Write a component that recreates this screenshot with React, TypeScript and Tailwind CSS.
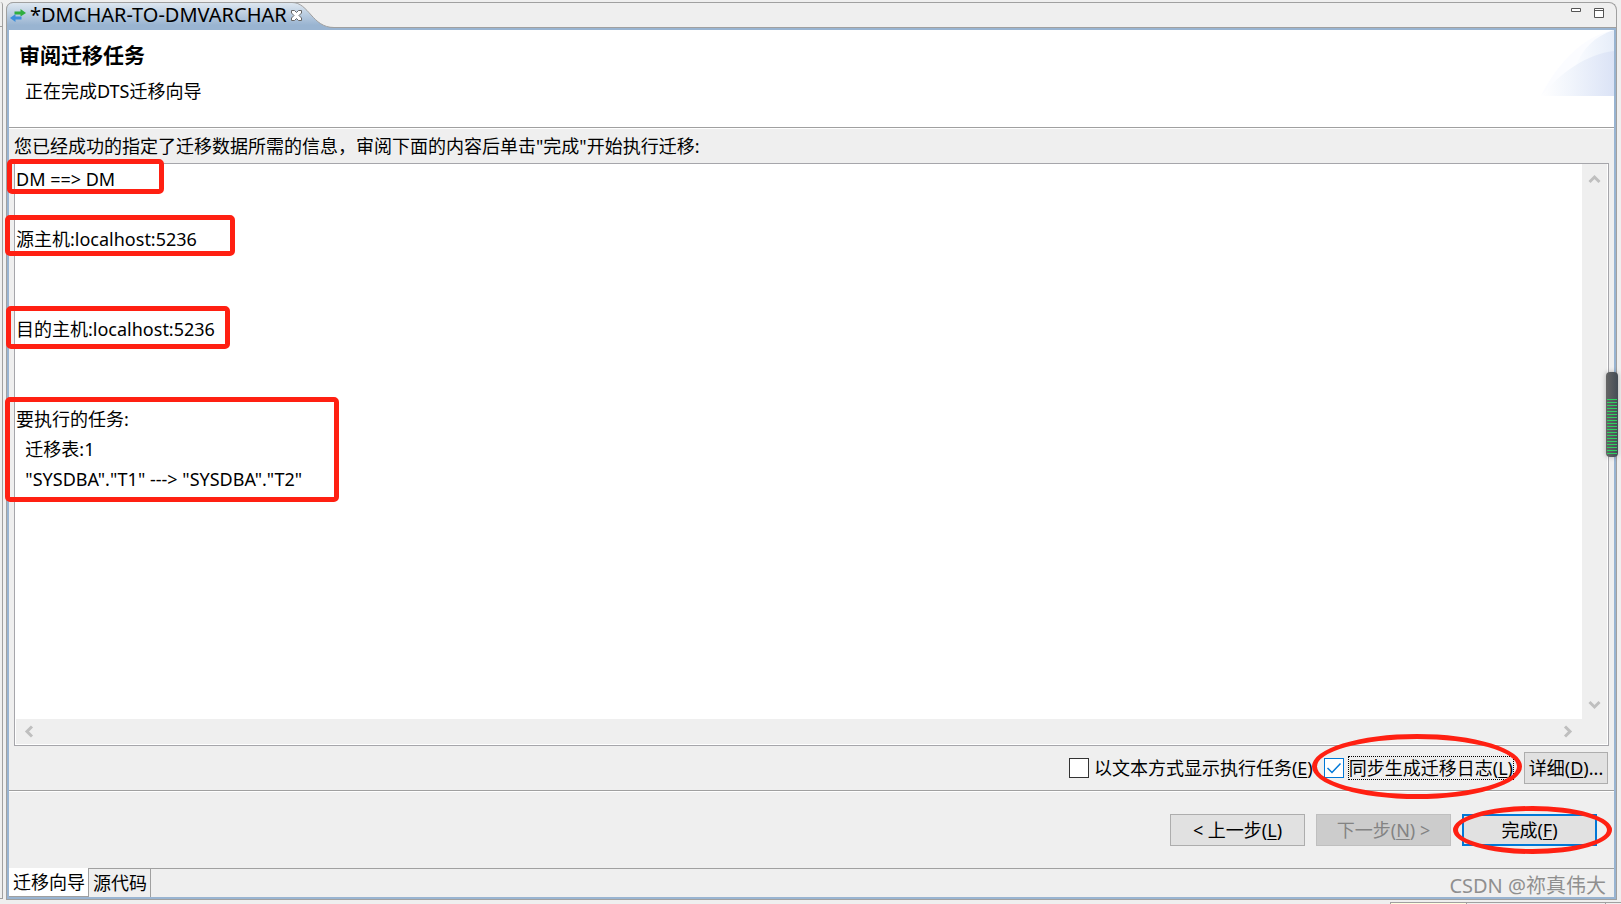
import React, { useState } from 'react';

const SUMMARY = [
  'DM ==> DM',
  '',
  '源主机:localhost:5236',
  '',
  '',
  '目的主机:localhost:5236',
  '',
  '',
  '要执行的任务:',
  '  迁移表:1',
  '  "SYSDBA"."T1" ---> "SYSDBA"."T2"',
].join('\n');

const MARKS = [
  'left-[-8px] top-[-5px] w-[157px] h-[35px]',
  'left-[-10px] top-[51px] w-[230px] h-[41px]',
  'left-[-9px] top-[142px] w-[224px] h-[43px]',
  'left-[-10px] top-[233px] w-[334px] h-[105px]',
];

const PAGES = ['迁移向导', '源代码'];

const Key: React.FC<{ k: string }> = ({ k }) => (
  <>(<span className="underline underline-offset-2">{k}</span>)</>
);

const Arrow: React.FC<{ label: string; d: string; className: string }> = ({ label, d, className }) => (
  <button aria-label={label} className={`flex items-center justify-center ${className}`}>
    <svg width="13" height="13" viewBox="0 0 13 13" fill="none" stroke="#bfbfbf" strokeWidth="3">
      <path d={d} />
    </svg>
  </button>
);

const TitleBar: React.FC = () => (
  <div className="flex h-[26px] items-start justify-between rounded-t-lg border border-b-0 border-[#a0a0a0] shadow-[inset_0_-1px_0_#a0a0a0]">
    <div className="relative flex h-full items-start">
      <svg className="absolute -top-px -left-px" width="334" height="27" viewBox="0 0 334 27">
        <defs>
          <linearGradient id="tab" x1="0" y1="0" x2="0" y2="1">
            <stop offset="0" stopColor="#dfe8f1" />
            <stop offset="0.85" stopColor="#99b4d1" />
          </linearGradient>
        </defs>
        <path d="M0.5 27V7Q1 1 7 0.5H286C303 0.5 306 25.5 328 25.5H334V27Z" fill="url(#tab)" />
        <path d="M0.5 27V7Q1 1 7 0.5H286C303 0.5 306 25.5 328 25.5H334" fill="none" stroke="#a0a0a0" />
      </svg>
      <div className="relative flex items-center pl-[3px]">
        <svg width="16" height="13" viewBox="0 0 16 13">
          <path d="M4.5 2.5H10.5V0L16 4L10.5 7.5V5.5H4.5Z" fill="#2fae3f" />
          <path d="M11.5 7.5H5.5V5L0 9L5.5 13V10.5H11.5Z" fill="#3d8edb" />
        </svg>
        <span className="ml-1 text-xl leading-6">*DMCHAR-TO-DMVARCHAR</span>
        <button aria-label="关闭" className="ml-1">
          <svg width="11" height="11" viewBox="0 0 11 11" fill="#fff" stroke="#666">
            <path d="M0.5 0.5H3.5L5.5 2.5L7.5 0.5H10.5V3L8 5.5L10.5 8V10.5H7.5L5.5 8.5L3.5 10.5H0.5V8L3 5.5L0.5 3Z" />
          </svg>
        </button>
      </div>
    </div>
    <div className="flex gap-[13px] pt-[5px] pr-3">
      <button aria-label="最小化" className="flex">
        <svg width="10" height="10" fill="#fff" stroke="#555"><path d="M0.5 0.5H9.5V3.5H0.5Z" /></svg>
      </button>
      <button aria-label="最大化" className="flex">
        <svg width="10" height="10" fill="#fff" stroke="#555"><path d="M0.5 0.5H9.5V9.5H0.5ZM0.5 2.5H9.5" /></svg>
      </button>
    </div>
  </div>
);

const Header: React.FC = () => (
  <header className="flex h-[98px] justify-between border-b border-[#a0a0a0] bg-white">
    <div className="flex flex-col gap-2.5 pt-[11px] pl-2.5">
      <h1 className="text-[21px] leading-7 font-bold">审阅迁移任务</h1>
      <p className="pl-1.5 text-lg leading-6">正在完成DTS迁移向导</p>
    </div>
    <svg width="73" height="66" viewBox="0 0 73 66">
      <defs>
        <linearGradient id="swoosh" x1="0" x2="1">
          <stop offset="0" stopColor="#fff" />
          <stop offset="0.4" stopColor="#f1f5fc" />
          <stop offset="1" stopColor="#dbe3f6" />
        </linearGradient>
        <linearGradient id="swooshTop" x1="0" x2="1">
          <stop offset="0" stopColor="#fafcff" />
          <stop offset="1" stopColor="#e6edf9" />
        </linearGradient>
      </defs>
      <path d="M0 66C16 34 42 6 73 0V66Z" fill="#fbfcff" />
      <path d="M34 37C42 18 54 6 73 0V66H34Z" fill="url(#swooshTop)" />
      <path d="M0 66C20 42 46 24 73 21V66Z" fill="url(#swoosh)" />
    </svg>
  </header>
);

const SummaryBox: React.FC = () => (
  <div className="relative flex min-h-0 flex-1 flex-col border border-[#a6a6ab] bg-white pr-px pb-px">
    <div className="flex min-h-0 flex-1">
      <textarea
        aria-label="迁移任务摘要"
        readOnly
        wrap="off"
        value={SUMMARY}
        className="min-w-0 flex-1 resize-none overflow-hidden pl-px text-lg leading-[30px] outline-none"
      />
      <div className="flex flex-col justify-between bg-[#efefef]">
        <Arrow label="向上" d="M1.5 9L6.5 4L11.5 9" className="h-[30px] w-[25px]" />
        <Arrow label="向下" d="M1.5 4L6.5 9L11.5 4" className="h-[30px] w-[25px]" />
      </div>
    </div>
    <div className="ml-px flex justify-between bg-[#efefef] pr-[25px]">
      <Arrow label="向左" d="M9 1.5L4 6.5L9 11.5" className="h-[25px] w-[27px]" />
      <Arrow label="向右" d="M4 1.5L9 6.5L4 11.5" className="h-[25px] w-[30px]" />
    </div>
    {MARKS.map(mark => (
      <div key={mark} className={`pointer-events-none absolute rounded-[5px] border-[5px] border-[#ff2012] ${mark}`} />
    ))}
  </div>
);

const Check: React.FC<{ checked: boolean; onChange: () => void; className?: string; children: React.ReactNode }> = ({ checked, onChange, className, children }) => (
  <label className="flex items-center gap-1">
    <span className="relative flex">
      <input
        type="checkbox"
        checked={checked}
        onChange={onChange}
        className="size-5 appearance-none border border-[#333] bg-white checked:border-[#0078d7]"
      />
      {checked && (
        <svg className="pointer-events-none absolute inset-0" width="20" height="20" fill="none" stroke="#0078d7" strokeWidth="1.5">
          <path d="M3.5 10L8 14.5L16.5 5.5" />
        </svg>
      )}
    </span>
    <span className={`border border-dotted text-lg leading-[22px] whitespace-nowrap ${className}`}>{children}</span>
  </label>
);

const Ring: React.FC<{ className: string }> = ({ className }) => (
  <div className={`pointer-events-none absolute rounded-[50%] border-[5px] border-[#ff2012] ${className}`} />
);

export default function App() {
  const [asText, setAsText] = useState(false);
  const [syncLog, setSyncLog] = useState(true);
  const [page, setPage] = useState(0);

  return (
    <div className="flex h-screen flex-col overflow-hidden bg-[#efefef] font-['Noto_Sans','Noto_Sans_CJK_SC',sans-serif] text-black">
      <div className="flex min-h-0 flex-1 gap-[3px] pt-0.5">
        <div className="mb-px w-[3px] rounded-tr-sm border-r border-b border-[#a0a0a0] pt-6">
          <div className="border-t border-[#a0a0a0]" />
        </div>
        <main className="flex min-w-0 flex-1 flex-col">
          <TitleBar />
          <div className="flex min-h-0 flex-1 flex-col border-x border-b border-[#a0a0a0]">
            <div className="flex min-h-0 flex-1 flex-col border-2 border-[#99b4d1]">
              <Header />
              <section className="flex min-h-0 flex-1 flex-col border-t border-white px-[5px]">
                <p className="pt-[5px] pb-[5px] text-lg leading-6">
                  您已经成功的指定了迁移数据所需的信息，审阅下面的内容后单击"完成"开始执行迁移:
                </p>
                <SummaryBox />
                <div className="flex h-[44px] items-center justify-end gap-2.5 pr-px">
                  <Check checked={asText} onChange={() => setAsText(!asText)} className="border-transparent">
                    以文本方式显示执行任务<Key k="E" />
                  </Check>
                  <div className="relative">
                    <Check checked={syncLog} onChange={() => setSyncLog(!syncLog)} className="border-black">
                      同步生成迁移日志<Key k="L" />
                    </Check>
                    <Ring className="-top-[22px] -right-2 -bottom-[19px] -left-3" />
                  </div>
                  <button className="h-8 w-[84px] border border-[#adadad] bg-[#e1e1e1] text-lg leading-6 whitespace-nowrap">
                    详细<Key k="D" />...
                  </button>
                </div>
              </section>
              <footer className="flex h-[78px] items-center justify-end gap-[11px] border-t border-[#a0a0a0] pr-[17px] text-lg leading-6 shadow-[inset_0_1px_0_#fff]">
                <button className="h-8 w-[135px] border border-[#adadad] bg-[#e1e1e1]">&lt; 上一步<Key k="L" /></button>
                <button disabled className="h-8 w-[135px] border border-[#bfbfbf] bg-[#cccccc] text-[#838383]">下一步<Key k="N" /> &gt;</button>
                <div className="relative">
                  <button className="block h-8 w-[135px] border-2 border-[#0078d7] bg-[#e1e1e1]">完成<Key k="F" /></button>
                  <Ring className="-inset-y-2 -right-[15px] -left-[9px]" />
                </div>
              </footer>
              <nav className="flex h-[29px] text-lg leading-6">
                {PAGES.map((name, i) => (
                  <button
                    key={name}
                    onClick={() => setPage(i)}
                    className={`border-r border-[#a0a0a0] pr-[3px] pl-1 ${page === i ? 'border-b bg-white' : 'border-t'}`}
                  >
                    {name}
                  </button>
                ))}
                <div className="flex-1 border-t border-[#a0a0a0] pr-2 text-right text-xl leading-[34px] text-[#8f8f8f]">
                  CSDN @祢真伟大
                </div>
              </nav>
            </div>
          </div>
        </main>
        <div className="relative w-px">
          <div className="absolute top-[370px] -left-3.5 h-[85px] w-3 rounded bg-linear-to-r from-[#666] to-[#444c55] px-px pt-[27px] pb-0.5 shadow-[0_0_5px_#0004]">
            <div className="h-full bg-[repeating-linear-gradient(#2fd060_0_1px,transparent_1px_3px)]" />
          </div>
        </div>
      </div>
      <div className="flex h-1 items-end justify-end">
        <div className="h-0.5 w-[77px] border-x border-t border-[#a0a0a0] bg-[#ffffe1]" />
        <div className="h-0.5 w-[139px] border-t border-r border-[#a0a0a0]" />
        <div className="h-0.5 w-[15px] border-t border-[#a0a0a0]" />
      </div>
    </div>
  );
}
